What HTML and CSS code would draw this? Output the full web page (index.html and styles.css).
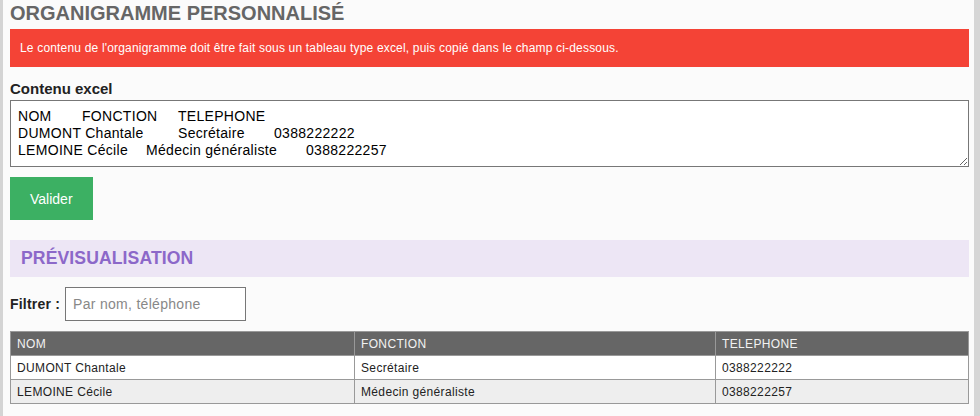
FILE: index.html
```html
<html>
    <head>
        <title>Organigramme personnalisé</title>
        <meta charset="utf-8">
        <link rel="stylesheet" href="styles.css">
    </head>
    <body>
        <div class="page">
            <h1>ORGANIGRAMME PERSONNALISÉ</h1>
            <div class="alert">Le contenu de l'organigramme doit être fait sous un tableau type excel, puis copié dans le champ ci-dessous.</div>

            <form id="orga_form">
                <label class="field-label" for="excel">Contenu excel</label>
                <textarea id="excel" rows="3">NOM	FONCTION	TELEPHONE
DUMONT Chantale		Secrétaire	0388222222
LEMOINE Cécile	Médecin généraliste	0388222257</textarea>
                <button type="button" class="btn-valider">Valider</button>
            </form>

            <h2 class="preview-title">PRÉVISUALISATION</h2>

            <div class="filter">
                <label for="filtre">Filtrer :</label>
                <input type="text" id="filtre" placeholder="Par nom, téléphone" />
            </div>

            <table class="orga">
                <colgroup>
                    <col class="c-nom">
                    <col class="c-fonction">
                    <col class="c-tel">
                </colgroup>
                <thead>
                    <tr><th>NOM</th><th>FONCTION</th><th>TELEPHONE</th></tr>
                </thead>
                <tbody>
                    <tr><td>DUMONT Chantale</td><td>Secrétaire</td><td>0388222222</td></tr>
                    <tr><td>LEMOINE Cécile</td><td>Médecin généraliste</td><td>0388222257</td></tr>
                </tbody>
            </table>
        </div>
    </body>
</html>
```

FILE: styles.css
```css
body {margin:0;background:#fbfbfb;color:#222;font-family:"Liberation Sans", Arial, sans-serif;}
.page {min-height:416px;box-sizing:border-box;border-left:3px solid #d4d4d4;border-right:6px solid #d6d6d6;padding:0 5px 0 7px;}

h1 {margin:0 0 3px;font-size:20px;line-height:26px;color:#666;}
.alert {background:#f44336;color:#fff;font-size:12px;line-height:14px;letter-spacing:0.18px;padding:12px 10px;}

.field-label {display:block;font-size:15px;font-weight:bold;line-height:18px;margin:13px 0 2px;}
#excel {display:block;box-sizing:border-box;width:100%;height:67px;margin:0;padding:7px;border:1px solid #777;background:#fff;color:#000;font-family:"Liberation Sans", Arial, sans-serif;font-size:14px;line-height:17px;letter-spacing:0.3px;tab-size:32px;resize:vertical;}
.btn-valider {display:block;margin-top:10px;height:43px;padding:0 20px;border:0;background:#3cb063;color:#fff;font-family:"Liberation Sans", Arial, sans-serif;font-size:14px;}

.preview-title {margin:20px 0 0;padding:0 11px;height:37px;line-height:37px;background:#ede6f5;color:#8c68c9;font-size:17.6px;letter-spacing:0.1px;}

.filter {display:flex;align-items:center;gap:5px;margin-top:10px;}
.filter label {font-size:14px;font-weight:bold;letter-spacing:0.2px;}
#filtre {box-sizing:border-box;width:181px;height:34px;margin:0;padding:0 7px;border:1px solid #777;background:#fff;font-family:"Liberation Sans", Arial, sans-serif;font-size:14px;letter-spacing:0.3px;}
#filtre::placeholder {color:#888;}

.orga {width:100%;margin-top:10px;border-collapse:collapse;table-layout:fixed;font-size:12px;letter-spacing:0.35px;}
.orga .c-nom {width:344px;}
.orga .c-fonction {width:361px;}
.orga th, .orga td {height:24px;padding:0 6px;border:1px solid #999;text-align:left;font-weight:normal;}
.orga th {background:#666;color:#f2f2f2;}
.orga td {background:#fff;color:#222;}
.orga tbody tr:nth-child(2) td {background:#eee;}
```
